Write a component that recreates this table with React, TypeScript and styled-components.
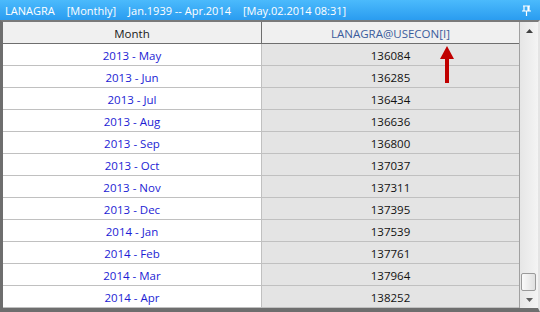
import React from 'react';
import styled, { createGlobalStyle } from 'styled-components';

const rows = [
  { month: '2013 - May', value: '136084' },
  { month: '2013 - Jun', value: '136285' },
  { month: '2013 - Jul', value: '136434' },
  { month: '2013 - Aug', value: '136636' },
  { month: '2013 - Sep', value: '136800' },
  { month: '2013 - Oct', value: '137037' },
  { month: '2013 - Nov', value: '137311' },
  { month: '2013 - Dec', value: '137395' },
  { month: '2014 - Jan', value: '137539' },
  { month: '2014 - Feb', value: '137761' },
  { month: '2014 - Mar', value: '137964' },
  { month: '2014 - Apr', value: '138252' }
];

const App: React.FC = () => {
  return (
    <>
      <GlobalStyle />
      <Window>
        <TitleBar>
          <TitleItem>LANAGRA</TitleItem>
          <TitleItem>[Monthly]</TitleItem>
          <TitleItem>Jan.1939 -- Apr.2014</TitleItem>
          <TitleItem>[May.02.2014 08:31]</TitleItem>
          <Pin width="9" height="11" viewBox="0 0 9 11">
            <path d="M1 1h7M2 1v5M6 1v5M7 1v5M0 6h9M4.5 6v5" stroke="#fff" strokeWidth="1.2" fill="none" />
          </Pin>
        </TitleBar>
        <Frame>
          <Grid>
            <HeaderCell>Month</HeaderCell>
            <HeaderCell $series>
              LANAGRA@USECON[I]
              <Arrow width="16" height="38" viewBox="0 0 16 38">
                <path d="M8 0 L15 13 L10 13 L10 37 L6 37 L6 13 L1 13 Z" fill="#c00000" />
              </Arrow>
            </HeaderCell>
            {rows.map((row, index) => (
              <React.Fragment key={index}>
                <MonthCell>{row.month}</MonthCell>
                <ValueCell>{row.value}</ValueCell>
              </React.Fragment>
            ))}
          </Grid>
          <ScrollBar>
            <ScrollArrow>
              <svg width="7" height="4" viewBox="0 0 7 4">
                <path d="M3.5 0 L7 4 L0 4 Z" fill="#404040" />
              </svg>
            </ScrollArrow>
            <Track>
              <Thumb />
            </Track>
            <ScrollArrow>
              <svg width="7" height="4" viewBox="0 0 7 4">
                <path d="M0 0 L7 0 L3.5 4 Z" fill="#606060" />
              </svg>
            </ScrollArrow>
          </ScrollBar>
        </Frame>
      </Window>
    </>
  );
};

export default App;

const GlobalStyle = createGlobalStyle`
  body {
    margin: 0;
    background: #ffffff;
    font-family: "Open Sans", "Noto Sans", sans-serif;
  }
`;

const Window = styled.div`
  width: 540px;
  height: 312px;
  display: flex;
  flex-direction: column;
  overflow: hidden;
`;

const TitleBar = styled.div`
  height: 20px;
  display: flex;
  align-items: center;
  gap: 12px;
  padding: 0 0 0 5px;
  background: linear-gradient(#4bbafc, #2a9cf0);
  color: #ffffff;
  font-size: 11px;
  box-sizing: border-box;
`;

const TitleItem = styled.span`
  white-space: pre;
`;

const Pin = styled.svg`
  margin-left: auto;
  margin-right: 9px;
`;

const Frame = styled.div`
  flex: 1;
  display: flex;
  background: #ffffff;
  border-style: solid;
  border-color: #7a7a7a #e4e4e4 #6e6e6e #6e6e6e;
  border-width: 2px 2px 4px 3px;
  box-sizing: border-box;
`;

const Grid = styled.div`
  width: 517px;
  display: grid;
  grid-template-columns: 259px 257px;
  grid-auto-rows: 22px;
  border-right: 1px solid #a0a0a0;
  align-content: start;
`;

const HeaderCell = styled.div<{ $series?: boolean }>`
  position: relative;
  display: flex;
  align-items: center;
  justify-content: center;
  background: #f0f0f0;
  border-bottom: 1px solid #6e6e6e;
  border-right: ${(p) => (p.$series ? 'none' : '1px solid #6e6e6e')};
  color: ${(p) => (p.$series ? '#3b5c9c' : '#1a1a1a')};
  font-size: 11.5px;
  padding-top: 1px;
  box-sizing: border-box;
`;

const Arrow = styled.svg`
  position: absolute;
  left: 177px;
  top: 24px;
`;

const MonthCell = styled.div`
  display: flex;
  align-items: center;
  justify-content: center;
  border-bottom: 1px solid #c0c0c0;
  border-right: 1px solid #c0c0c0;
  color: #1c1cd4;
  font-size: 11.5px;
  padding-top: 2px;
  box-sizing: border-box;
`;

const ValueCell = styled.div`
  display: flex;
  align-items: center;
  justify-content: center;
  background: #e4e4e4;
  border-bottom: 1px solid #c0c0c0;
  color: #111111;
  font-size: 11.5px;
  padding-top: 2px;
  box-sizing: border-box;
`;

const ScrollBar = styled.div`
  width: 18px;
  display: flex;
  flex-direction: column;
  background: linear-gradient(90deg, #e6e6e6, #f4f4f4);
`;

const ScrollArrow = styled.div`
  height: 17px;
  display: flex;
  align-items: center;
  justify-content: center;
`;

const Track = styled.div`
  flex: 1;
  display: flex;
  flex-direction: column;
  justify-content: flex-end;
  padding: 0 2px 0 1px;
`;

const Thumb = styled.div`
  height: 16px;
  border: 1px solid #9a9a9a;
  border-radius: 2px;
  background: linear-gradient(90deg, #fafafa, #e0e0e0);
`;
